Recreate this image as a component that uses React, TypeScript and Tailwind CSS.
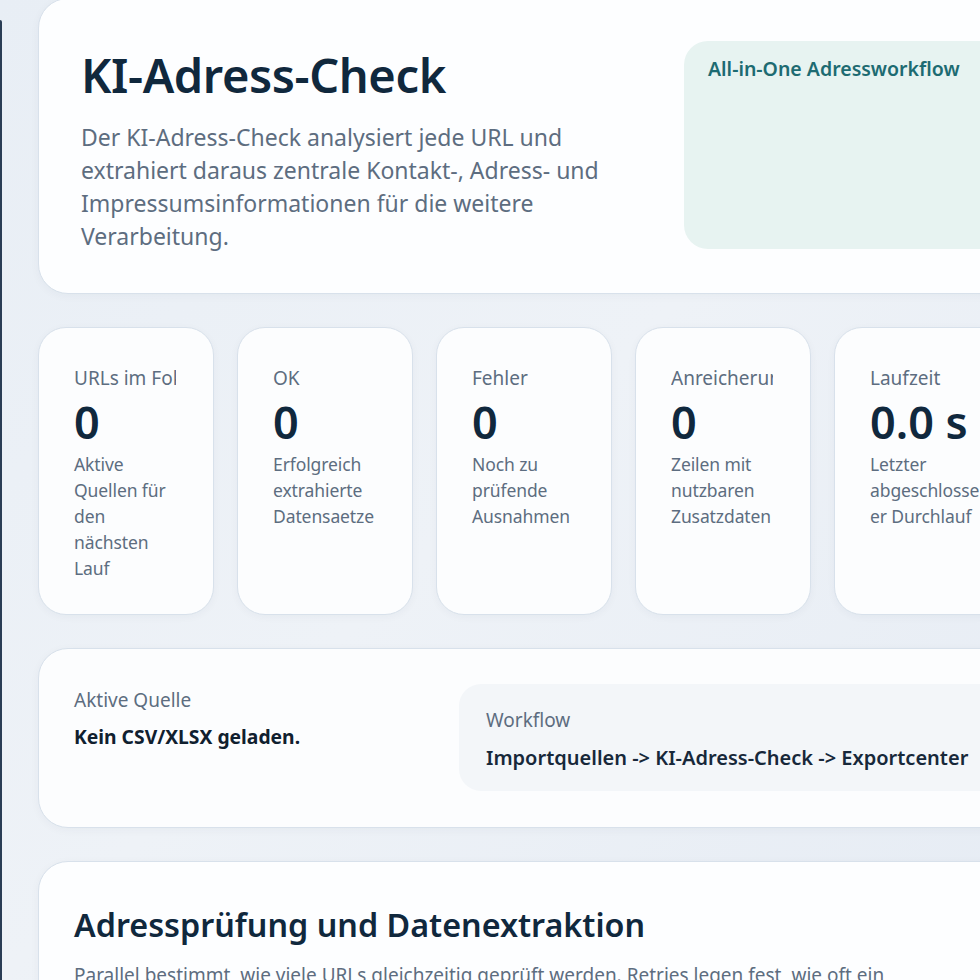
const stats = [
  { label: 'URLs im Fokus', value: '0', hint: 'Aktive Quellen für den nächsten Lauf' },
  { label: 'OK', value: '0', hint: 'Erfolgreich extrahierte Datensaetze' },
  { label: 'Fehler', value: '0', hint: 'Noch zu prüfende Ausnahmen' },
  { label: 'Anreicherung', value: '0', hint: 'Zeilen mit nutzbaren Zusatzdaten' },
  { label: 'Laufzeit', value: '0.0 s', hint: 'Letzter abgeschlossen\u200Ber Durchlauf' },
];

function StatCard({ label, value, hint }: { label: string; value: string; hint: string }) {
  return (
    <div className="w-[176px] shrink-0 h-[288px] rounded-[28px] border border-[#d8e1eb] bg-[#fcfdfe] pl-[35px] pr-[37px] pt-[36px] shadow-[0_2px_8px_rgba(30,50,80,0.04)]">
      <div className="overflow-hidden whitespace-nowrap text-[19px] leading-[28px] text-[#5d6d80]">{label}</div>
      <div className="mt-[2px] text-[45px] leading-[56px] font-semibold text-[#10283d]">{value}</div>
      <div className="mt-[1px] text-[17.5px] leading-[26px] text-[#5d6d80] tracking-[-0.1px]">{hint}</div>
    </div>
  );
}

export default function App() {
  return (
    <div
      className="relative flex w-[980px] h-[980px] overflow-hidden bg-[linear-gradient(135deg,#e8eef5_0%,#eef2f7_50%,#e6ecf4_100%)]"
      style={{ fontFamily: '"Noto Sans", "Open Sans", sans-serif' }}
    >
      {/* sidebar edge */}
      <div className="mt-[20px] w-[2px] shrink-0 rounded-tr-[6px] bg-[#2a3d55]" />

      <div className="ml-[36px] mt-[-2px] flex w-[980px] shrink-0 flex-col gap-[33px]">
        {/* hero */}
        <div className="flex h-[296px] shrink-0 rounded-[30px] border border-[#d8e1eb] bg-[#fdfeff] pl-[42px] shadow-[0_2px_10px_rgba(30,50,80,0.04)]">
          <div className="w-[603px] shrink-0 pt-[44px]">
            <h1 className="text-[47px] leading-[64px] font-semibold text-[#10283d] tracking-[-0.4px]">KI-Adress-Check</h1>
            <p className="mt-[14px] w-[540px] text-[23px] leading-[33px] text-[#5d6d80]">
              Der KI-Adress-Check analysiert jede URL und extrahiert daraus zentrale Kontakt-, Adress- und Impressumsinformationen für die weitere Verarbeitung.
            </p>
          </div>
          <div className="mt-[42px] mb-[44px] w-[330px] shrink-0 rounded-[24px] bg-[#e7f3f1] pl-[24px] pt-[14px]">
            <div className="text-[19.5px] leading-[28px] font-semibold text-[#1d6b72]">All-in-One Adressworkflow</div>
          </div>
        </div>

        {/* stats */}
        <div className="flex shrink-0 gap-[23px]">
          {stats.map((s) => (
            <StatCard key={s.label} {...s} />
          ))}
        </div>

        {/* source */}
        <div className="flex h-[180px] shrink-0 rounded-[30px] border border-[#d8e1eb] bg-[#fcfdfe] pl-[35px] shadow-[0_2px_10px_rgba(30,50,80,0.04)]">
          <div className="w-[385px] shrink-0 pt-[37px]">
            <div className="text-[19px] leading-[28px] text-[#5d6d80]">Aktive Quelle</div>
            <div className="mt-[10px] text-[19.3px] leading-[26px] font-bold text-[#10202f]">Kein CSV/XLSX geladen.</div>
          </div>
          <div className="mt-[35px] h-[107px] flex-1 rounded-[22px] bg-[#f3f6f9] pl-[27px] pt-[22px]">
            <div className="text-[19px] leading-[28px] text-[#5d6d80]">Workflow</div>
            <div className="mt-[10px] whitespace-nowrap text-[20px] leading-[28px] font-semibold text-[#17283a]">
              Importquellen -&gt; KI-Adress-Check -&gt; Exportcenter
            </div>
          </div>
        </div>

        {/* extraction */}
        <div className="h-[200px] shrink-0 rounded-[30px] border border-[#d8e1eb] bg-[#fdfeff] pl-[35px] pt-[38px] shadow-[0_2px_10px_rgba(30,50,80,0.04)]">
          <h2 className="text-[32.3px] leading-[48px] font-semibold text-[#10283d]">Adressprüfung und Datenextraktion</h2>
          <p className="mt-[13px] w-[880px] text-[19px] leading-[28px] text-[#5d6d80]">
            Parallel bestimmt, wie viele URLs gleichzeitig geprüft werden. Retries legen fest, wie oft ein fehlgeschlagener Abruf wiederholt wird.
          </p>
        </div>
      </div>
    </div>
  );
}
